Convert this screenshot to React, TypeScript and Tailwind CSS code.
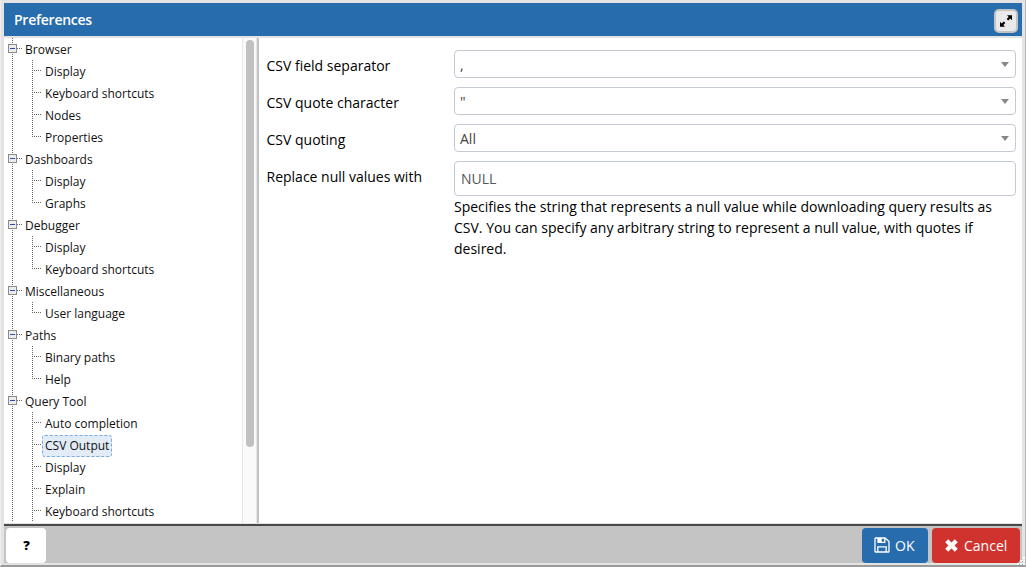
import React from "react";

type Group = { label: string; items: string[]; open?: boolean };

const groups: Group[] = [
  { label: "Browser", items: ["Display", "Keyboard shortcuts", "Nodes", "Properties"] },
  { label: "Dashboards", items: ["Display", "Graphs"] },
  { label: "Debugger", items: ["Display", "Keyboard shortcuts"] },
  { label: "Miscellaneous", items: ["User language"] },
  { label: "Paths", items: ["Binary paths", "Help"] },
  {
    label: "Query Tool",
    items: ["Auto completion", "CSV Output", "Display", "Explain", "Keyboard shortcuts"],
    open: true,
  },
];

const dots = { stroke: "#666", strokeWidth: 1, strokeDasharray: "1 1" };

function GroupLines() {
  return (
    <svg width="18" height="22" className="shrink-0" shapeRendering="crispEdges">
      <line x1="8.5" y1="0" x2="8.5" y2="22" {...dots} />
      <line x1="13" y1="10.5" x2="18" y2="10.5" {...dots} />
      <rect x="4.5" y="6.5" width="8" height="8" rx="1" fill="#ececec" stroke="#8a8a8a" />
      <rect x="6" y="10" width="5" height="1" fill="#2c4cae" />
    </svg>
  );
}

function ItemLines({ last }: { last: boolean }) {
  return (
    <svg width="38" height="22" className="shrink-0" shapeRendering="crispEdges">
      <line x1="8.5" y1="0" x2="8.5" y2="22" {...dots} />
      <line x1="28.5" y1="0" x2="28.5" y2={last ? 11 : 22} {...dots} />
      <line x1="30" y1="10.5" x2="38" y2="10.5" {...dots} />
    </svg>
  );
}

function Tree() {
  return (
    <div className="w-[238px] shrink-0 overflow-hidden text-[12px] text-[#111]">
      {groups.map((g) => (
        <div key={g.label}>
          <div className="flex h-[22px]">
            <GroupLines />
            <span className="pl-[3px] leading-[24px]">{g.label}</span>
          </div>
          {g.items.map((item, i) => (
            <div key={item} className="flex h-[22px]">
              <ItemLines last={!g.open && i === g.items.length - 1} />
              {item === "CSV Output" ? (
                <span className="mt-px h-[22px] rounded-[3px] border border-dashed border-[#74addf] bg-[#e2ecf7] px-[2px] leading-[20px]">
                  {item}
                </span>
              ) : (
                <span className="pl-[3px] leading-[24px]">{item}</span>
              )}
            </div>
          ))}
        </div>
      ))}
    </div>
  );
}

function SelectRow({ label, value }: { label: string; value: string }) {
  return (
    <div className="flex h-[37px]">
      <label className="w-[187.5px] shrink-0 pt-[5px] leading-[21px]">{label}</label>
      <div className="flex h-[28px] flex-1 items-center justify-between rounded-[4px] border border-[#c3cad5] pr-[6px] pl-[5px] text-[14px] leading-[20px] text-[#444]">
        <span className="pt-[2px]">{value}</span>
        <svg width="8" height="5">
          <path d="M0 0H8L4 5Z" fill="#888" />
        </svg>
      </div>
    </div>
  );
}

export default function App() {
  return (
    <div className="relative flex h-[567px] w-[1026px] flex-col overflow-hidden border-x border-b-2 border-l-[#eeeeee] border-r-[#b5b5b5] border-b-[#9a9a9a] bg-[#e3e3e3] pt-[3px] pr-[3px] pb-[2px] pl-[3px] font-['Open_Sans',sans-serif] text-[14px] text-[#000]">
      <header className="flex h-[33px] shrink-0 items-center justify-between bg-[#276cad] pr-[4px] pl-[10px]">
        <h1 className="text-[14px] font-semibold tracking-[-0.25px] text-white">Preferences</h1>
        <button className="mt-[3px] flex h-[24px] w-[24px] items-center justify-center rounded-[5px] border-2 border-[#c3c3c3] bg-[#e9e9e9]">
          <svg width="14" height="14" viewBox="0 0 14 14" fill="#000">
            <path d="M8 1.2H13V6.2L11.3 4.5L9.2 6.6L7.6 5L9.7 2.9Z" />
            <path d="M6 12.8H1V7.8L2.7 9.5L4.8 7.4L6.4 9L4.3 11.1Z" />
          </svg>
        </button>
      </header>

      <main className="mt-[2px] flex h-[485px] shrink-0 bg-white">
        <Tree />
        <div className="flex w-[15px] shrink-0 justify-center border-x border-[#e6e6e6] bg-[#fafafa] pt-[2px]">
          <div className="h-[407px] w-[8px] rounded-full bg-[#c1c1c1]" />
        </div>
        <div className="w-[2px] shrink-0 bg-[#c4c4c4]" />
        <section className="min-w-0 flex-1 pt-[12px] pr-[6px] pl-[7.5px]">
          <SelectRow label="CSV field separator" value="," />
          <SelectRow label="CSV quote character" value={'"'} />
          <SelectRow label="CSV quoting" value="All" />
          <div className="flex">
            <label className="w-[187.5px] shrink-0 pt-[5px] leading-[21px]">
              Replace null values with
            </label>
            <div className="min-w-0 flex-1">
              <div className="flex h-[35px] items-center rounded-[4px] border border-[#c3cad5] pl-[6px] leading-[20px] text-[#555]">
                NULL
              </div>
              <p className="leading-[21px]">
                Specifies the string that represents a null value while downloading query results as
                CSV. You can specify any arbitrary string to represent a null value, with quotes if
                desired.
              </p>
            </div>
          </div>
        </section>
      </main>

      <footer className="mt-px flex h-[39px] shrink-0 justify-between border-t-2 border-[#484848] bg-[#c4c4c4] pt-[2px] pr-[2px] pl-[2px]">
        <button className="flex h-[35px] w-[40px] items-center justify-center rounded-[4px] bg-white pl-px text-[13px] font-extrabold text-black">
          ?
        </button>
        <div className="flex gap-[4px] leading-[20px] text-white">
          <button className="flex h-[35px] w-[66px] items-center rounded-[4px] bg-[#276cad] pl-[12px]">
            <svg width="16" height="16" viewBox="0 0 16 16" className="mb-[2px]">
              <path
                d="M1.6 1H11L15 4.6V14.4Q15 15 14.4 15H1.6Q1 15 1 14.4V1.6Q1 1 1.6 1Z"
                fill="none"
                stroke="#fff"
                strokeWidth="1.3"
              />
              <path
                d="M4 1V5.4H10.8V1M3.8 15V9.8H12.2V15"
                fill="none"
                stroke="#fff"
                strokeWidth="1.3"
              />
              <path d="M4 1H7.7V5H4Z" fill="#fff" />
            </svg>
            <span className="ml-[5px]">OK</span>
          </button>
          <button className="flex h-[35px] w-[88px] items-center rounded-[4px] bg-[#d0332e] pl-[13px]">
            <svg width="13" height="13" viewBox="0 0 13 13" className="mb-px">
              <path d="M1.7 1.7L11.3 11.3M11.3 1.7L1.7 11.3" stroke="#fff" strokeWidth="4.2" fill="none" />
            </svg>
            <span className="ml-[6px]">Cancel</span>
          </button>
        </div>
      </footer>
      <svg width="9" height="9" className="absolute -right-px -bottom-px" shapeRendering="crispEdges">
        <g fill="#fff">
          <rect x="6" y="0" width="2" height="2" />
          <rect x="3" y="3" width="2" height="2" />
          <rect x="6" y="3" width="2" height="2" />
          <rect x="0" y="6" width="2" height="2" />
          <rect x="3" y="6" width="2" height="2" />
          <rect x="6" y="6" width="2" height="2" />
        </g>
        <g fill="#999">
          <rect x="8" y="1" width="1" height="1" />
          <rect x="5" y="4" width="1" height="1" />
          <rect x="8" y="4" width="1" height="1" />
          <rect x="2" y="7" width="1" height="1" />
          <rect x="5" y="7" width="1" height="1" />
          <rect x="8" y="7" width="1" height="1" />
        </g>
      </svg>
    </div>
  );
}
